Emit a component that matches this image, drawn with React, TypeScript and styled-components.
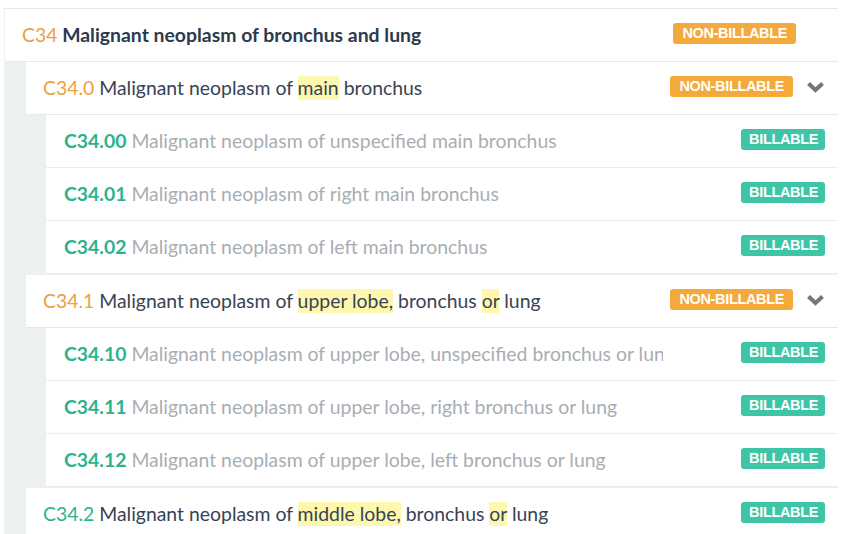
import React, { Fragment } from 'react'
import styled, { createGlobalStyle } from 'styled-components'

const colors = {
  orange: '#eca13e',
  orangeBadge: '#f4a93b',
  teal: '#2db38c',
  tealBadge: '#3ec5a7',
  dark: '#2c3a4d',
  text: '#384354',
  muted: '#a8aeb4',
  strip: '#edf0f1',
  line: '#e6e9eb',
  mark: '#fdf8ae',
  chevron: '#767676',
}

type Billing = 'billable' | 'non-billable'

interface CodeNode {
  code: string
  title: string
  billing: Billing
  children?: CodeNode[]
}

const tree: CodeNode = {
  code: 'C34',
  title: 'Malignant neoplasm of bronchus and lung',
  billing: 'non-billable',
  children: [
    {
      code: 'C34.0',
      title: 'Malignant neoplasm of [main] bronchus',
      billing: 'non-billable',
      children: [
        { code: 'C34.00', title: 'Malignant neoplasm of unspecified main bronchus', billing: 'billable' },
        { code: 'C34.01', title: 'Malignant neoplasm of right main bronchus', billing: 'billable' },
        { code: 'C34.02', title: 'Malignant neoplasm of left main bronchus', billing: 'billable' },
      ],
    },
    {
      code: 'C34.1',
      title: 'Malignant neoplasm of [upper lobe,] bronchus [or] lung',
      billing: 'non-billable',
      children: [
        {
          code: 'C34.10',
          title: 'Malignant neoplasm of upper lobe, unspecified bronchus or lung',
          billing: 'billable',
        },
        { code: 'C34.11', title: 'Malignant neoplasm of upper lobe, right bronchus or lung', billing: 'billable' },
        { code: 'C34.12', title: 'Malignant neoplasm of upper lobe, left bronchus or lung', billing: 'billable' },
      ],
    },
    {
      code: 'C34.2',
      title: 'Malignant neoplasm of [middle lobe,] bronchus [or] lung',
      billing: 'billable',
    },
  ],
}

const GlobalStyle = createGlobalStyle`
  body {
    margin: 0;
    background: #ffffff;
    font-family: Lato, "Open Sans", sans-serif;
  }
`

// splits "foo [bar] baz" into plain and highlighted parts
const Title = (props: { text: string }) => {
  const parts = props.text.split(/(\[[^\]]+\])/)
  return (
    <Fragment>
      {parts.map((p, i) =>
        p.startsWith('[') ? <Highlight key={i}>{p.slice(1, -1)}</Highlight> : <Fragment key={i}>{p}</Fragment>
      )}
    </Fragment>
  )
}

const Chevron = () => (
  <ChevronIcon width='19' height='12' viewBox='0 0 19 12'>
    <polyline points='2.5,2.5 9.5,9 16.5,2.5' fill='none' stroke={colors.chevron} strokeWidth='4.2' />
  </ChevronIcon>
)

const CodeRow = (props: { node: CodeNode; level: number }) => {
  const { node, level } = props
  const hasChildren = !!node.children && node.children.length > 0
  return (
    <Row $level={level}>
      <Label $level={level}>
        <Code $level={level} $billing={node.billing}>
          {node.code}
        </Code>{' '}
        <Title text={node.title} />
      </Label>
      <Badge $billing={node.billing}>{node.billing === 'billable' ? 'Billable' : 'Non-billable'}</Badge>
      {level === 2 && hasChildren && <Chevron />}
    </Row>
  )
}

const Branch = (props: { node: CodeNode; level: number }) => {
  const { node, level } = props
  return (
    <Fragment>
      <CodeRow node={node} level={level} />
      {node.children && (
        <Nested $level={level}>
          {node.children.map((c) => (
            <Branch key={c.code} node={c} level={level + 1} />
          ))}
        </Nested>
      )}
    </Fragment>
  )
}

export default function App() {
  return (
    <Fragment>
      <GlobalStyle />
      <Page>
        <Card>
          <Branch node={tree} level={1} />
        </Card>
      </Page>
    </Fragment>
  )
}

const Page = styled.div`
  padding: 8px 0 0 4px;
  width: 834px;
  height: 526px;
  overflow: hidden;
`

const Card = styled.div`
  border-top: 1px solid ${colors.line};
  border-left: 1px solid #eef0f1;
  background: #ffffff;
`

const Nested = styled.div<{ $level: number }>`
  background: ${colors.strip};
  padding-left: ${(p) => (p.$level === 1 ? 21 : 20)}px;
  padding-bottom: ${(p) => (p.$level === 1 ? 0 : 1)}px;
`

const Row = styled.div<{ $level: number }>`
  display: flex;
  align-items: center;
  height: 52px;
  box-sizing: content-box;
  background: #ffffff;
  border-bottom: 1px solid ${(p) => (p.$level === 3 ? '#ebedef' : colors.line)};
  padding-left: ${(p) => (p.$level === 3 ? 18 : 17)}px;
  padding-right: ${(p) => (p.$level === 1 ? 42 : 13)}px;
`

const Label = styled.div<{ $level: number }>`
  flex: 0 1 ${(p) => (p.$level === 3 ? '599px' : 'auto')};
  margin-right: auto;
  overflow: hidden;
  white-space: nowrap;
  font-size: 19.4px;
  line-height: 23px;
  padding-bottom: 1px;
  font-weight: ${(p) => (p.$level === 1 ? 700 : 400)};
  color: ${(p) => (p.$level === 1 ? colors.dark : p.$level === 2 ? colors.text : colors.muted)};
`

const Code = styled.span<{ $level: number; $billing: Billing }>`
  color: ${(p) => (p.$billing === 'billable' ? colors.teal : colors.orange)};
  font-weight: ${(p) => (p.$level === 3 ? 700 : 400)};
`

const Highlight = styled.mark`
  background: ${colors.mark};
  color: inherit;
  padding: 1px 0;
`

const Badge = styled.span<{ $billing: Billing }>`
  flex: none;
  margin-bottom: 4px;
  padding: 0 ${(p) => (p.$billing === 'billable' ? '7px 0 8px' : '9px 0 9px')};
  height: 21px;
  line-height: 21px;
  border-radius: 3px;
  background: ${(p) => (p.$billing === 'billable' ? colors.tealBadge : colors.orangeBadge)};
  color: #ffffff;
  font-family: 'Liberation Sans', Arial, sans-serif;
  font-weight: 700;
  font-size: 14.5px;
  letter-spacing: -0.35px;
  text-transform: uppercase;
`

const ChevronIcon = styled.svg`
  flex: none;
  margin-left: 13px;
  margin-bottom: 2px;
`
